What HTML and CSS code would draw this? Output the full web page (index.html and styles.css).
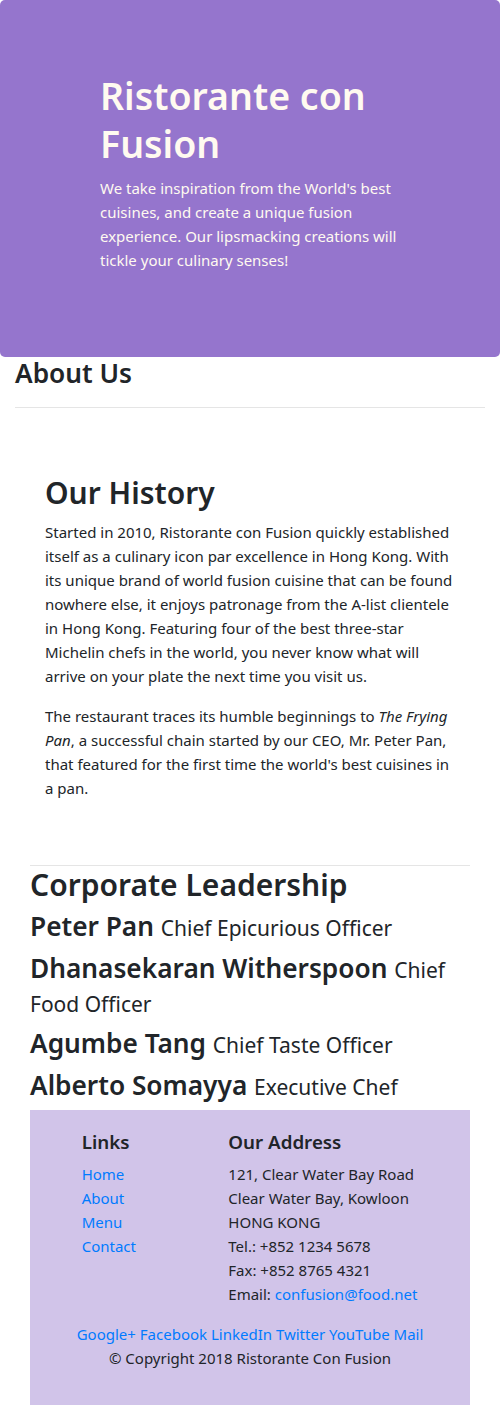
FILE: index.html
```html
<!DOCTYPE html>
<html lang="en">
<head>
<meta charset="utf-8">
<title>Ristorante con Fusion: About Us</title>
<link rel="stylesheet" href="styles.css">
</head>
<body>
<header class="jumbotron">
  <div class="jumbo-text">
    <h1 class="jumbo-title">Ristorante con Fusion</h1>
    <p class="jumbo-lead">We take inspiration from the World's best cuisines, and create a unique fusion experience. Our lipsmacking creations will tickle your culinary senses!</p>
  </div>
</header>

<main class="page">
  <h3 class="page-title">About Us</h3>
  <hr class="rule-wide">

  <div class="wrap">
    <section class="history">
      <h2 class="heading">Our History</h2>
      <p class="para">Started in 2010, Ristorante con Fusion quickly established itself as a culinary icon par excellence in Hong Kong. With its unique brand of world fusion cuisine that can be found nowhere else, it enjoys patronage from the A-list clientele in Hong Kong. Featuring four of the best three-star Michelin chefs in the world, you never know what will arrive on your plate the next time you visit us.</p>
      <p class="para">The restaurant traces its humble beginnings to <em>The Frying Pan</em>, a successful chain started by our CEO, Mr. Peter Pan, that featured for the first time the world's best cuisines in a pan.</p>
    </section>

    <hr class="rule">

    <section class="leadership">
      <h2 class="heading lead-heading">Corporate Leadership</h2>
      <h3 class="leader">Peter Pan <small class="role">Chief Epicurious Officer</small></h3>
      <h3 class="leader">Dhanasekaran Witherspoon <small class="role">Chief Food Officer</small></h3>
      <h3 class="leader">Agumbe Tang <small class="role">Chief Taste Officer</small></h3>
      <h3 class="leader">Alberto Somayya <small class="role">Executive Chef</small></h3>
    </section>

    <footer class="footer">
      <div class="footer-cols">
        <div class="col-links">
          <h5 class="foot-title">Links</h5>
          <ul class="link-list">
            <li><a href="#">Home</a></li>
            <li><a href="#">About</a></li>
            <li><a href="#">Menu</a></li>
            <li><a href="#">Contact</a></li>
          </ul>
        </div>
        <div class="col-address">
          <h5 class="foot-title">Our Address</h5>
          <address class="address">
            121, Clear Water Bay Road<br>
            Clear Water Bay, Kowloon<br>
            HONG KONG<br>
            Tel.: +852 1234 5678<br>
            Fax: +852 8765 4321<br>
            Email: <a href="#">confusion@food.net</a>
          </address>
        </div>
      </div>
      <div class="social">
        <a href="#">Google+</a> <a href="#">Facebook</a> <a href="#">LinkedIn</a> <a href="#">Twitter</a> <a href="#">YouTube</a> <a href="#">Mail</a>
      </div>
      <p class="copyright">© Copyright 2018 Ristorante Con Fusion</p>
    </footer>
  </div>
</main>
</body>
</html>
```
FILE: styles.css
```css
html, body {
  margin: 0;
  padding: 0;
}
body {
  font-family: "Noto Sans", "Open Sans", sans-serif;
  font-size: 15px;
  line-height: 24px;
  color: #212529;
  background: #fff;
}
a {
  color: #007bff;
  text-decoration: none;
}
h1, h2, h3, h5 {
  margin: 0 0 8px;
  font-weight: 600;
}

/* Jumbotron */
.jumbotron {
  background: #9575cd;
  color: #fffaf0;
  border-radius: 5px;
  padding: 72px 0 69px 100px;
}
.jumbo-text {
  width: 310px;
}
.jumbo-title {
  font-size: 37.5px;
  line-height: 48px;
}
.jumbo-lead {
  margin: 0 0 16px;
}

/* Page */
.page-title {
  font-size: 26.25px;
  line-height: 33.6px;
  margin: 0;
  padding: 0 15px;
}
.rule-wide {
  margin: 16px 15px;
  border: 0;
  border-top: 1px solid rgba(0, 0, 0, 0.1);
}
.wrap {
  padding: 0 30px;
}
.history {
  padding: 50px 15px 49px;
}
.heading {
  font-size: 30px;
  line-height: 38.4px;
}
.para {
  margin: 0 0 16px;
}
.rule {
  margin: 0;
  border: 0;
  border-top: 1px solid rgba(0, 0, 0, 0.1);
}
.lead-heading {
  margin-bottom: 6px;
}
.leader {
  font-size: 26.25px;
  line-height: 33.6px;
}
.role {
  font-size: 80%;
  font-weight: 400;
  line-height: 1;
}

/* Footer */
.footer {
  background: #d1c4e9;
  padding: 20px 0;
}
.footer-cols {
  display: grid;
  grid-template-columns: 36.67px 146.67px 256.67px;
}
.col-links {
  grid-column: 2;
  padding: 0 15px;
}
.col-address {
  grid-column: 3;
  padding: 0 15px;
}
.foot-title {
  font-size: 18.75px;
  line-height: 24px;
}
.link-list {
  list-style: none;
  margin: 0 0 16px;
  padding: 0;
}
.address {
  font-style: normal;
  margin: 0 0 16px;
}
.social {
  text-align: center;
}
.copyright {
  text-align: center;
  margin: 0 0 16px;
}
```
